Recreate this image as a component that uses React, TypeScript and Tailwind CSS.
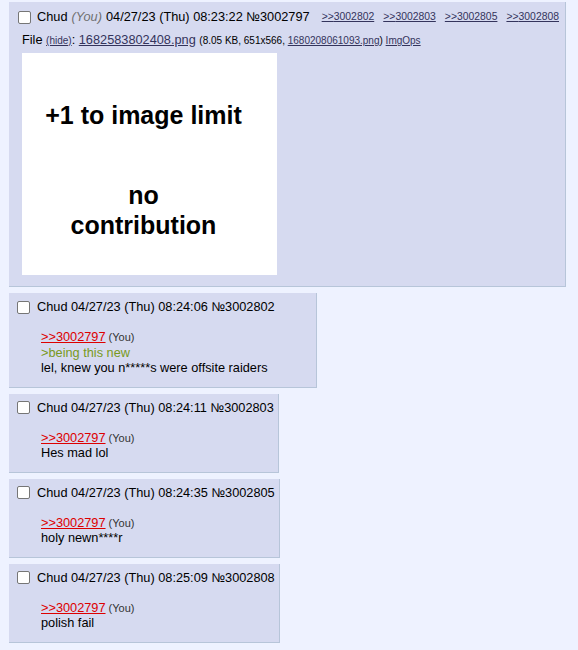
const font = "font-['Liberation_Sans',Arial,sans-serif]";

function Checkbox() {
  return <span className="inline-block w-[13px] h-[13px] bg-white border border-[#767676] rounded-[2px] shrink-0" />;
}

type Reply = {
  time: string;
  no: string;
  lines: { text: string; green?: boolean }[];
};

const replies: Reply[] = [
  {
    time: "08:24:06",
    no: "3002802",
    lines: [{ text: ">being this new", green: true }, { text: "lel, knew you n*****s were offsite raiders" }],
  },
  { time: "08:24:11", no: "3002803", lines: [{ text: "Hes mad lol" }] },
  { time: "08:24:35", no: "3002805", lines: [{ text: "holy newn****r" }] },
  { time: "08:25:09", no: "3002808", lines: [{ text: "polish fail" }] },
];

function ReplyPost({ r }: { r: Reply }) {
  return (
    <div className="w-fit bg-[#d6daf0] border-r border-b border-[#b7c5d9] pt-[5px] pb-[11px] pl-[8px] pr-[4px] mt-[6px]">
      <div className="flex items-center h-[18px] leading-[18px] text-[12.75px] text-black whitespace-nowrap">
        <Checkbox />
        <span className="ml-[7px]">Chud 04/27/23 (Thu) {r.time} №{r.no}</span>
      </div>
      <div className="mt-[13px] pl-[24px] pr-[44px] text-[12.75px] leading-[15.5px] text-black whitespace-nowrap">
        <div className="h-[15.5px]">
          <a className="text-[#dd0000] underline">&gt;&gt;3002797</a>
          <span className="text-[11px] leading-none text-[#333]"> (You)</span>
        </div>
        {r.lines.map((l, i) => (
          <div key={i} className={l.green ? "h-[15.5px] text-[#789922]" : "h-[15.5px]"}>
            {l.text}
          </div>
        ))}
      </div>
    </div>
  );
}

export default function App() {
  return (
    <div className={`${font} min-h-[650px] bg-[#eef2ff] pt-[2px] pl-[9px]`}>
      <div className="w-[557px] bg-[#d6daf0] border-r border-b border-[#b7c5d9] pt-[6px] pb-[11px] pl-[9px]">
        <div className="flex items-center h-[18px] leading-[18px] text-[12.75px] text-black whitespace-nowrap">
          <Checkbox />
          <span className="ml-[6px]">Chud</span>
          <span className="ml-[4px] italic text-[#707070]">(You)</span>
          <span className="ml-[4px]">04/27/23 (Thu) 08:23:22 №3002797</span>
          <span className="flex gap-[9px] ml-[12px] text-[10.4px] leading-none text-[#34345c]">
            {["3002802", "3002803", "3002805", "3002808"].map((n) => (
              <a key={n} className="underline">&gt;&gt;{n}</a>
            ))}
          </span>
        </div>
        <div className="mt-[6px] ml-[4px] h-[16px] leading-[16px] text-[12.75px] text-black whitespace-nowrap">
          File <a className="text-[10px] leading-none text-[#34345c] underline">(hide)</a>:{" "}
          <a className="text-[#34345c] underline">1682583802408.png</a>{" "}
          <span className="text-[10px] leading-none">
            (8.05 KB, 651x566, <a className="text-[#34345c] underline">1680208061093.png</a>){" "}
            <a className="text-[#34345c] underline">ImgOps</a>
          </span>
        </div>
        <div className="mt-[5px] ml-[4px] w-[255px] h-[222px] pr-[12px] bg-white flex flex-col items-center font-bold text-[25px] leading-[30px] text-black">
          <div className="mt-[47px]">+1 to image limit</div>
          <div className="mt-[50px]">no</div>
          <div>contribution</div>
        </div>
      </div>
      {replies.map((r) => (
        <ReplyPost key={r.no} r={r} />
      ))}
    </div>
  );
}
